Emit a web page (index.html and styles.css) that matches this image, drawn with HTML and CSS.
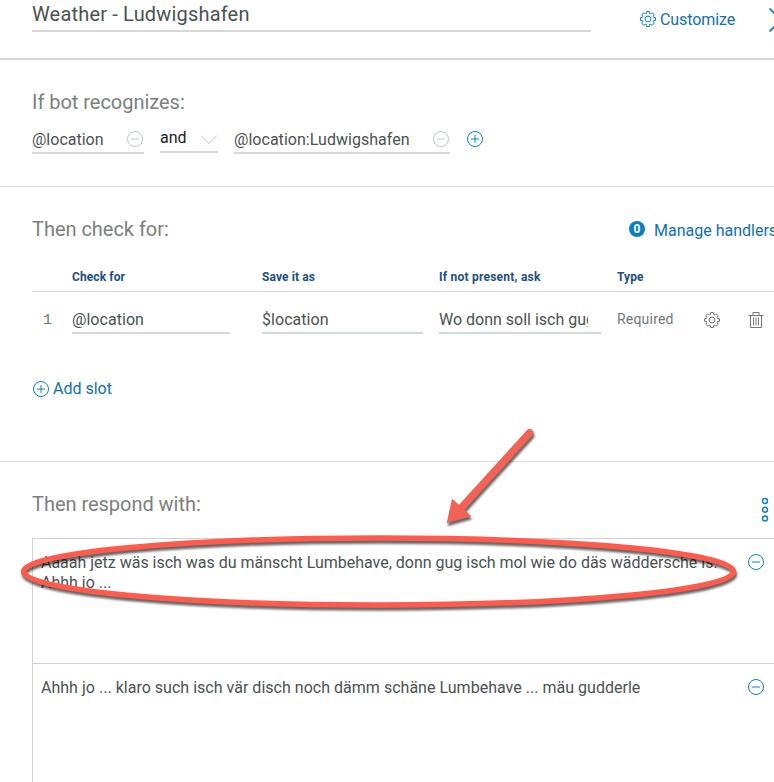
FILE: index.html
```html
<!DOCTYPE html>
<html lang="en">
<head>
<meta charset="utf-8">
<title>Weather - Ludwigshafen</title>
<link rel="stylesheet" href="styles.css">
</head>
<body>
<svg class="defs" aria-hidden="true">
  <symbol id="minus" viewBox="0 0 16 16"><circle cx="8" cy="8" r="7.5"/><path d="M4 8h8"/></symbol>
  <symbol id="plus" viewBox="0 0 16 16"><circle cx="8" cy="8" r="7.5"/><path d="M4 8h8M8 4v8"/></symbol>
  <symbol id="gear" viewBox="0 0 16 16"><circle cx="8" cy="8" r="2.9"/><path d="M6.6 .5h2.8v1.8l1.4.6 1.3-1.3 2.3 2.3-1.3 1.3.6 1.4h1.8v2.8h-1.8l-.6 1.4 1.3 1.3-2.3 2.3-1.3-1.3-1.4.6v1.8H6.600v-1.800l-1.400-.6-1.300 1.300-2.300-2.300 1.300-1.300-.6-1.400H.5V6.600h1.800l.6-1.400-1.300-1.300 2.300-2.300 1.300 1.300 1.400-.6z"/></symbol>
</svg>
<main class="panel">
  <header class="top">
    <div class="title"><span>Weather - Ludwigshafen</span></div>
    <a class="customize"><svg class="icon"><use href="#gear"/></svg><span>Customize</span></a>
    <svg class="close" viewBox="0 0 24 24"><path d="M.5.500l23 23M23.500.500l-23 23"/></svg>
  </header>

  <section class="recognizes">
    <h2>If bot recognizes:</h2>
    <div class="conditions">
      <div class="field first"><span>@location</span><svg class="icon pale"><use href="#minus"/></svg></div>
      <div class="field operator"><span>and</span><svg class="chevron" viewBox="0 0 16 9"><path d="M0 .5l8 8 8-8"/></svg></div>
      <div class="field second"><span>@location:Ludwigshafen</span><svg class="icon pale"><use href="#minus"/></svg></div>
      <svg class="icon add"><use href="#plus"/></svg>
    </div>
  </section>

  <section class="check">
    <div class="check-head">
      <h2>Then check for:</h2>
      <a class="handlers"><b class="count">0</b><span>Manage handlers</span></a>
    </div>
    <div class="grid labels">
      <span></span><span>Check for</span><span>Save it as</span><span class="l3">If not present, ask</span><span>Type</span>
    </div>
    <div class="grid slot">
      <span class="num">1</span>
      <div class="cell c1"><span>@location</span></div>
      <div class="cell tint c2"><span>$location</span></div>
      <div class="cell tint c3"><span class="ask">Wo donn soll isch gugge</span></div>
      <span class="required">Required</span>
      <svg class="icon grey"><use href="#gear"/></svg>
      <svg class="icon grey trash" viewBox="0 0 16 16"><path d="M.5 3.500h15M5 3V.5h6V3M2.500 3.500v12h11v-12M5.500 5.500v8M8 5.500v8M10.500 5.500v8"/></svg>
    </div>
    <a class="add-slot"><svg class="icon"><use href="#plus"/></svg><span>Add slot</span></a>
  </section>

  <section class="respond">
    <div class="respond-head">
      <h2>Then respond with:</h2>
      <svg class="dots" viewBox="0 0 8 26"><circle cx="4" cy="4" r="2.500"/><circle cx="4" cy="12.800" r="2.500"/><circle cx="4" cy="21.500" r="2.500"/></svg>
    </div>
    <div class="responses">
      <div class="response">
        <p><span class="r1">Aaaah jetz wäs isch was du mänscht Lumbehave, donn gug isch mol wie do däs wäddersche is.</span><br><span>Ahhh jo ...</span></p>
        <svg class="icon"><use href="#minus"/></svg>
      </div>
      <div class="response">
        <p><span class="r3">Ahhh jo ... klaro such isch vär disch noch dämm schäne Lumbehave ... mäu gudderle</span></p>
        <svg class="icon"><use href="#minus"/></svg>
      </div>
    </div>
  </section>

  <svg class="annotation" viewBox="0 0 774 782">
    <ellipse cx="378.500" cy="571.500" rx="355" ry="33.500"/>
    <path d="M526.800 430.300a3.800 3.800 0 0 1 5.600 5.200L464.700 509.700 471.300 516.300 446.700 523.300 452 498.700 459 504.700z"/>
  </svg>
</main>
</body>
</html>
```
FILE: styles.css
```css
* { box-sizing: border-box; }
body { margin: 0; background: #fff; color: #4a5252; font: 16px/20px Roboto, "Noto Sans", sans-serif; }
.defs { position: absolute; width: 0; height: 0; }
.panel { position: relative; width: 774px; height: 782px; overflow: hidden; }
span { white-space: nowrap; }
svg { fill: none; stroke: currentColor; flex: none; }
.icon { width: 16px; height: 16px; display: block; }
a { color: #0f6fb5; display: flex; align-items: center; }
h2 { margin: 0; font-size: 20px; line-height: 24px; font-weight: 400; letter-spacing: -.03px; color: #7b7f7f; white-space: nowrap; }

.top { display: flex; height: 60px; padding-left: 32px; border-bottom: 2px solid #d8d8d8; }
.title { flex: none; width: 559px; height: 32px; padding-top: 2px; border-bottom: 2px solid #d8d8d8; font-size: 20px; line-height: 24px; letter-spacing: .18px; }
.customize { flex: none; width: 95px; height: 20px; margin: 9px 0 0 49px; gap: 4px; letter-spacing: -.1px; }
.customize span { padding-top: 1px; }
.close { width: 24px; height: 24px; margin: 8px 0 0 34px; color: #0f80c4; stroke-width: 1.800; }

.recognizes { height: 127px; padding: 30px 0 0 32px; border-bottom: 1px solid #d8d8d8; }
.conditions { display: flex; align-items: flex-start; margin-top: 15px; }
.field { display: flex; justify-content: space-between; height: 25px; border-bottom: 2px solid #d8d8d8; }
.field .icon { margin-top: 2px; }
.field span { margin-top: 1px; }
.first { width: 112px; padding-right: 1px; margin-right: 16px; }
.operator { width: 58px; height: 24px; padding-right: 1px; margin-right: 16px; color: #222; }
.operator span { margin-top: -1px; }
.chevron { width: 16px; height: 9px; margin-top: 6px; color: #b9c1c1; }
.second { width: 216px; padding-right: 1px; letter-spacing: .03px; }
.pale { color: #bdc6c6; }
.add { margin: 2px 0 0 17px; color: #0f80c4; }

.check { height: 275px; padding: 30px 0 0 32px; border-bottom: 1px solid #d8d8d8; }
.check-head { display: flex; justify-content: space-between; }
.handlers { gap: 9px; width: 145px; }
.handlers span { padding-top: 3px; }
.count { width: 16px; height: 16px; border-radius: 50%; background: #087fc5; color: #fff; font-size: 12px; line-height: 16px; text-align: center; flex: none; }
.grid { display: grid; grid-template-columns: 40px 190px 177px 178px 87px 44px 16px; }
.labels { height: 51px; padding-top: 26px; border-bottom: 1px solid #d8d8d8; color: #1d5080; font-size: 12px; line-height: 20px; font-weight: 700; letter-spacing: .1px; }
.l3 { letter-spacing: .23px; }
.slot { height: 42px; padding-top: 17px; }
.num { padding: 2px 0 0 11px; font: 15px/20px "Liberation Mono", monospace; color: #72777a; }
.cell { height: 25px; padding-top: 1px; border-bottom: 2px solid #d8d8d8; letter-spacing: .05px; }
.tint { border-color: #cfdadd; }
.c1 { width: 158px; }
.c2 { width: 161px; }
.c3 { width: 162px; padding-right: 13px; letter-spacing: 0; }
.ask { display: block; overflow: hidden; }
.required { font-size: 14px; letter-spacing: .2px; color: #72777a; }
.slot .icon { margin-top: 3px; }
.grey { color: #72777a; }
.add-slot { width: 90px; margin-top: 44px; gap: 4px; padding-left: 1px; }
.add-slot span { padding-top: 1px; }
.add-slot .icon, .customize .icon, .response .icon { color: #0f80c4; }

.respond { padding: 30px 0 0 32px; }
.respond-head { display: flex; justify-content: space-between; height: 46px; padding-right: 5px; }
.dots { width: 8px; height: 26px; margin-top: 5px; color: #0f80c4; stroke-width: 1.500; }
.responses { border-left: 1px solid #d0d3d3; }
.response { display: flex; justify-content: space-between; height: 125px; padding: 14px 10px 0 8px; border-top: 1px solid #d0d3d3; }
.response p { width: 680px; margin: 0; }
.response .icon { margin-top: 1px; }
.r1 { letter-spacing: -.01px; }
.r3 { letter-spacing: .02px; }

.annotation { position: absolute; left: 0; top: 0; width: 774px; height: 782px; filter: drop-shadow(1.500px 3.500px 1px rgba(0,0,0,.6)); }
.annotation ellipse { stroke: #ff5a4c; stroke-width: 5.500; }
.annotation path { fill: #f16355; stroke: none; }
```
